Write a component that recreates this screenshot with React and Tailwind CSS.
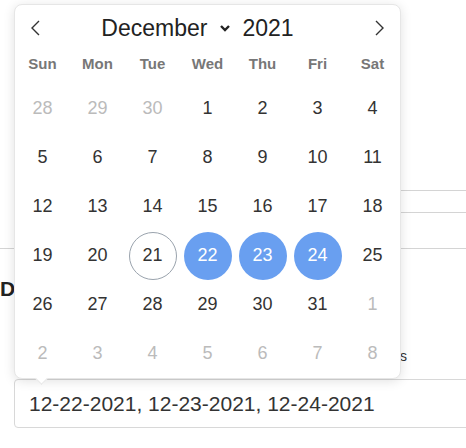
import React from "react";

const weekdays = ["Sun", "Mon", "Tue", "Wed", "Thu", "Fri", "Sat"];

const weeks = [
  [28, 29, 30, 1, 2, 3, 4],
  [5, 6, 7, 8, 9, 10, 11],
  [12, 13, 14, 15, 16, 17, 18],
  [19, 20, 21, 22, 23, 24, 25],
  [26, 27, 28, 29, 30, 31, 1],
  [2, 3, 4, 5, 6, 7, 8],
];

const selected = [22, 23, 24];

const DayCell = ({ day, outside, today }) => {
  const isSelected = !outside && selected.includes(day);
  let cls = "text-[#333]";
  if (outside) cls = "text-[#bbb]";
  if (isSelected) cls = "bg-[#699ff0] text-white";
  if (today) cls = "border border-[#9aa3ad] text-[#333]";
  return (
    <div className="flex h-[49px] items-center justify-center">
      <div className={`flex h-[48px] w-[48px] items-center justify-center rounded-full text-[18px] ${cls}`}>
        {day}
      </div>
    </div>
  );
};

const Calendar = () => {
  return (
    <div className="absolute left-[14px] top-[4px] w-[387px] rounded-lg border border-[#e6e6e6] bg-white shadow-[0_2px_12px_rgba(0,0,0,0.12)]">
      {/* Cabecera */}
      <div className="flex h-[46px] items-center justify-between px-[14px]">
        <svg width="14" height="20" viewBox="0 0 14 20" fill="none" stroke="#333" strokeWidth="1.4">
          <path d="M10 3 L3 10 L10 17" />
        </svg>
        <div className="mr-[20px] flex items-center text-[23px] text-[#222]">
          <span>December</span>
          <svg className="ml-[12px] mr-[11px]" width="12" height="10" viewBox="0 0 12 10" fill="none" stroke="#222" strokeWidth="2.4">
            <path d="M2 3 L6 7 L10 3" />
          </svg>
          <span>2021</span>
        </div>
        <svg width="14" height="20" viewBox="0 0 14 20" fill="none" stroke="#333" strokeWidth="1.4">
          <path d="M4 3 L11 10 L4 17" />
        </svg>
      </div>

      {/* Dias de la semana */}
      <div className="grid h-[22px] grid-cols-7 items-center mt-[2px] mb-[9px]">
        {weekdays.map((d) => (
          <div key={d} className="text-center text-[15px] font-bold text-[#777]">
            {d}
          </div>
        ))}
      </div>

      {/* Dias */}
      {weeks.map((week, wi) => (
        <div key={wi} className="grid grid-cols-7">
          {week.map((day, di) => {
            const outside = (wi === 0 && day > 20) || (wi >= 4 && day < 10);
            return (
              <DayCell key={di} day={day} outside={outside} today={!outside && day === 21} />
            );
          })}
        </div>
      ))}

      <div className="absolute -bottom-[5px] left-[22px] h-[9px] w-[9px] rotate-45 border-b border-r border-[#e6e6e6] bg-white" />
    </div>
  );
};

export default function App() {
  return (
    <div className="relative h-[448px] w-[466px] overflow-hidden bg-white font-['Liberation_Sans',Arial,sans-serif]">
      {/* Contenido de fondo */}
      <div className="h-[191px] ml-[250px] border-b border-[#d4d4d4]" />
      <div className="h-[22px] ml-[250px] border-b border-[#d4d4d4]" />
      <div className="h-[36px] border-b border-[#d4d4d4]" />
      <h2 className="mt-[29px] h-[22px] text-[21px] font-bold leading-[22px] text-[#222]">Dates</h2>
      <div className="mt-[48px] w-[407px] text-right text-[14px] leading-[16px] text-[#333]">Pick dates</div>
      <div className="mt-[15px] ml-[14px] flex h-[49px] w-[470px] items-center rounded border border-[#d8d8d8] px-[14px] text-[21px] text-[#333]">
        12-22-2021, 12-23-2021, 12-24-2021
      </div>

      <Calendar />
    </div>
  );
}
